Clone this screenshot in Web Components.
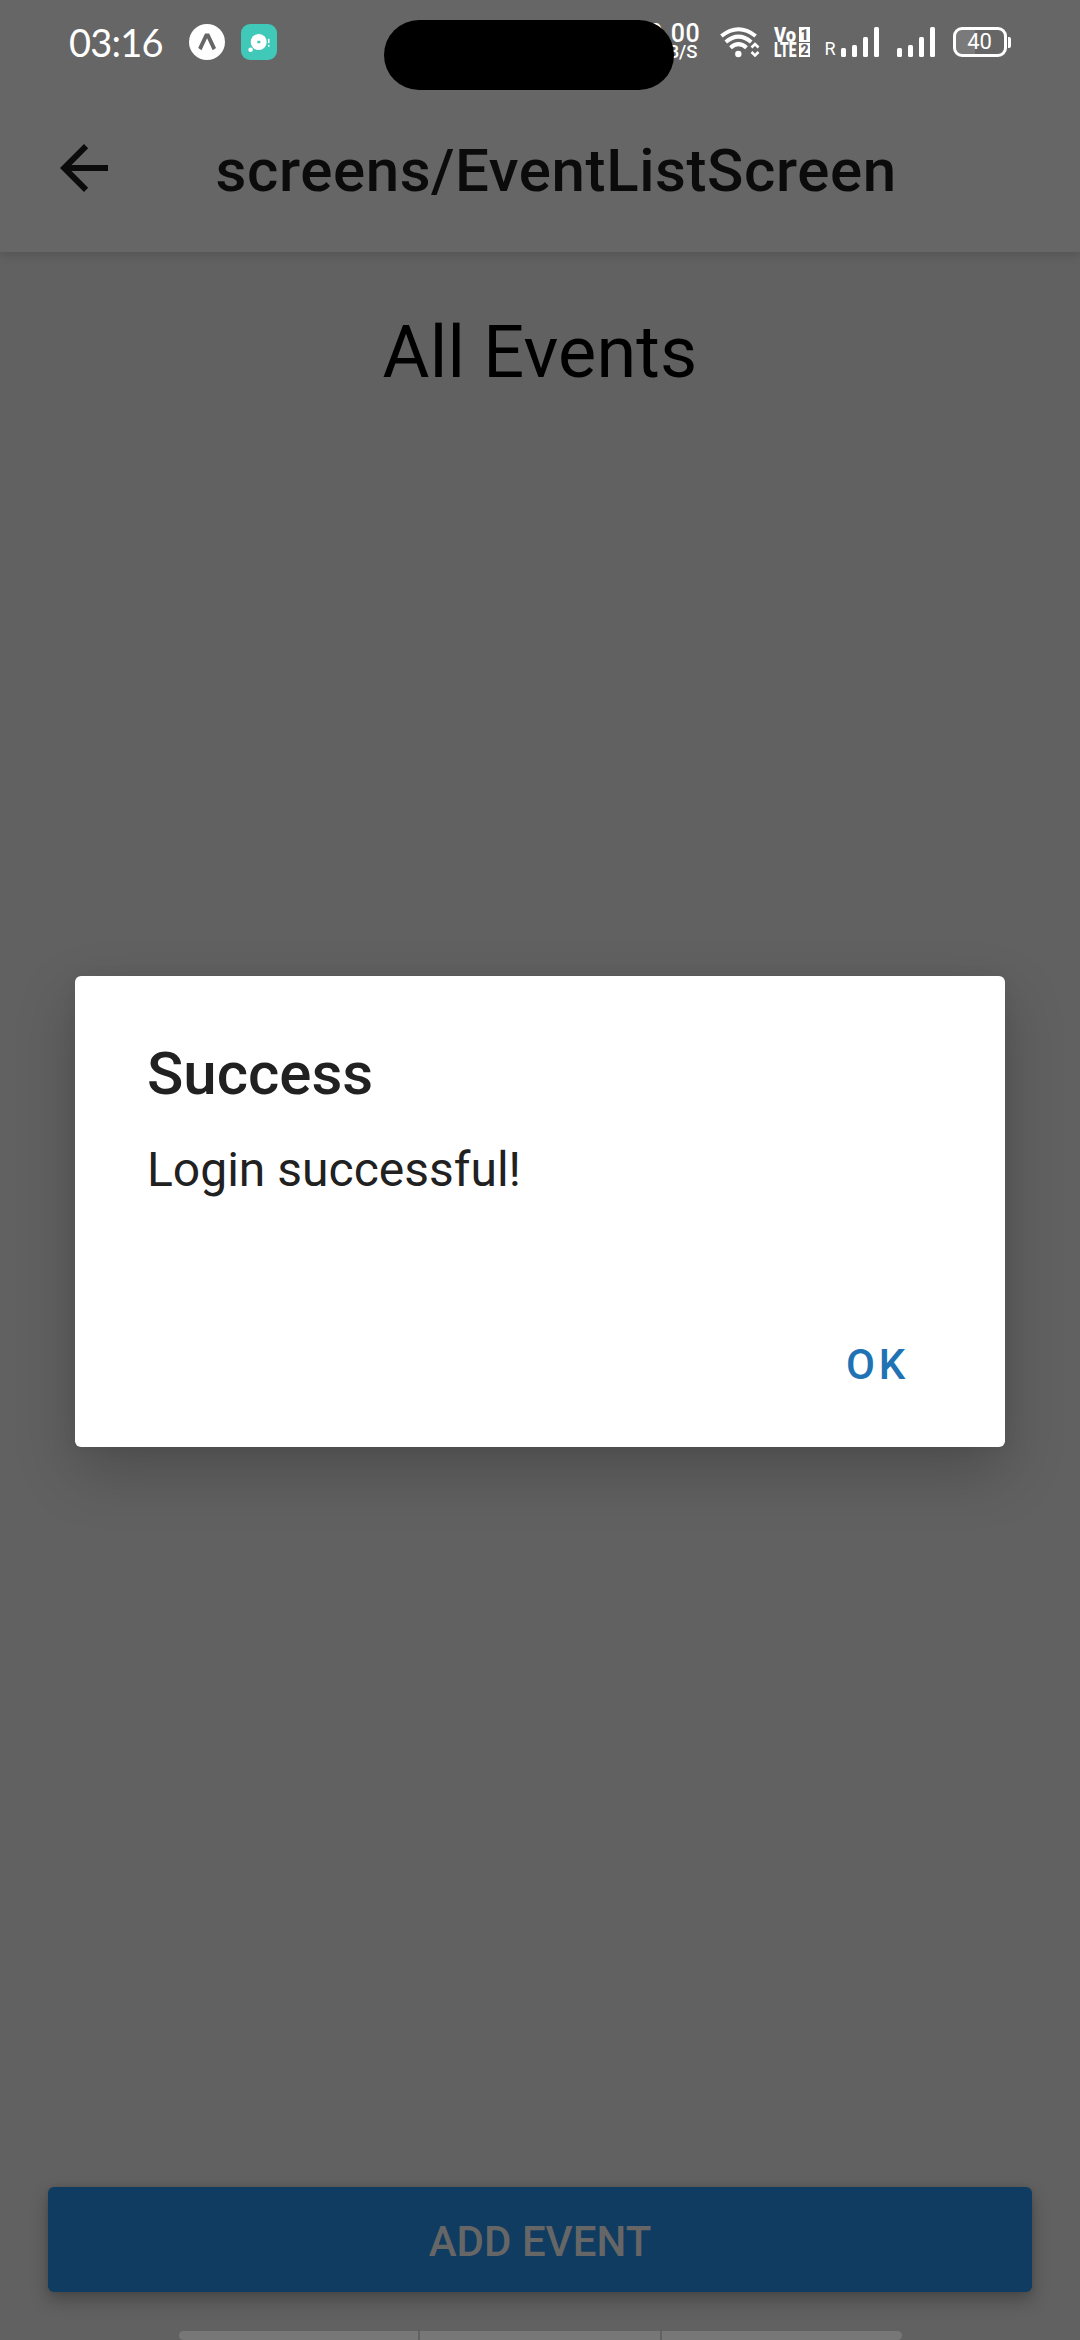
<!DOCTYPE html>
<html lang="en">
<head>
<meta charset="utf-8">
<title>Event list</title>
<style>
html,body{margin:0;padding:0;background:#616161}
body{font-family:Roboto,"Liberation Sans",sans-serif}
</style>
</head>
<body>
<event-app></event-app>
<script>
const define = (name, html) => customElements.define(name, class extends HTMLElement {
  constructor() {
    super();
    this.attachShadow({ mode: 'open' }).innerHTML = html;
  }
});

define('signal-bars', `
<style>
:host{display:flex;align-items:flex-end;gap:6px;height:30px}
i{width:5px;background:#fff;border-radius:1.5px}
</style>
<i style="height:9px"></i><i style="height:12px"></i><i style="height:20px"></i><i style="height:30px"></i>`);

define('battery-level', `
<style>
:host{display:flex;align-items:center;gap:1.5px}
.cell{box-sizing:border-box;width:54px;height:30px;border:3px solid #fff;border-radius:9px;
 background:linear-gradient(90deg,#7a7a7a 19px,transparent 19px);display:flex;align-items:center;justify-content:center;
 font:400 22px/24px Roboto,sans-serif;color:#fff}
.tip{width:3px;height:11px;border-radius:0 2px 2px 0;background:#fff}
</style>
<div class="cell"><slot></slot></div><div class="tip"></div>`);

define('status-bar', `
<style>
:host{display:flex;align-items:flex-start;justify-content:space-between;position:relative;height:84px;box-sizing:border-box;
 padding:24px 69px 0 69px;color:#fff;background:#666}
.left,.right{display:flex;align-items:center;height:36px}
.time{font:400 38px/36px Lato,sans-serif;letter-spacing:-.8px;width:120px;white-space:nowrap}
svg{display:block;flex:none}
.speed{display:flex;flex-direction:column;align-items:flex-end;width:60px;margin-right:19px}
.speed b{font:500 25px/20px Roboto,sans-serif;letter-spacing:.7px}
.speed small{font:500 18.5px/16px Roboto,sans-serif;padding-right:3px}
.r{font:400 18px/18px Roboto,sans-serif;margin:14px 6px 0 14px;width:10px}
.island{position:absolute;left:384px;top:20px;width:290px;height:70px;border-radius:35px;background:#000}
</style>
<div class="left">
 <span class="time">03:16</span>
 <svg width="36" height="36" viewBox="0 0 36 36"><circle cx="18" cy="18" r="18" fill="#fff"/>
  <path d="M16 9.5h4.2L27 24l-3.3 2.2-5.6-12-5.6 12L9.2 24z" fill="#666"/></svg>
 <svg width="36" height="36" viewBox="0 0 36 36" style="margin-left:16px"><rect width="36" height="36" rx="9" fill="#40c8b8"/>
  <circle cx="17.7" cy="18" r="8" fill="#fff"/><rect x="16.3" y="16.8" width="3" height="2.4" fill="#40c8b8"/>
  <circle cx="9.6" cy="25.8" r="2.3" fill="#fff"/><path d="M27.8 14.8v4.4M27.8 21v1.8" stroke="#fff" stroke-width="1.4"/></svg>
</div>
<div class="right">
 <div class="speed"><b>0.00</b><small>KB/S</small></div>
 <svg width="40" height="32" viewBox="0 0 40 32">
  <g fill="none" stroke="#fff" stroke-width="4"><path d="M1.4 10Q18.500-3.500 35.600 10"/><path d="M5.800 16Q18.500 5.200 31.200 16"/><path d="M10.500 21.700Q18.500 14.500 26.500 21.700"/></g>
  <circle cx="18.300" cy="28" r="3.200" fill="#fff"/>
  <path d="M31.500 21.500L35 18l3.500 3.500M31.500 26L35 29.500l3.500-3.500" stroke="#fff" stroke-width="2.600" fill="none"/></svg>
 <svg width="37" height="31" viewBox="0 0 37 31" style="margin-left:14px" font-family="Roboto,sans-serif" font-weight="900" fill="#fff">
  <text x="0" y="14.500" font-size="20" textLength="22" lengthAdjust="spacingAndGlyphs">Vo</text>
  <text x="0" y="30" font-size="19.500" textLength="22.500" lengthAdjust="spacingAndGlyphs">LTE</text>
  <rect x="25" y="0" width="11" height="15"/><rect x="25" y="16" width="11" height="14"/>
  <g fill="#666" font-size="14"><text x="26.500" y="12.500">1</text><text x="26.500" y="28">2</text></g></svg>
 <span class="r">R</span>
 <signal-bars></signal-bars>
 <signal-bars style="margin:0 18px"></signal-bars>
 <battery-level>40</battery-level>
</div>
<div class="island"></div>`);

define('nav-header', `
<style>
:host{display:flex;align-items:center;height:168px;box-sizing:border-box;padding:0 60px;background:#666;
 box-shadow:0 3px 9px rgba(0,0,0,.14);position:relative}
svg{display:block;flex:none}
h1{margin:5px 0 0 107.500px;font:500 60px/70px Roboto,sans-serif;color:#0b0b0b;white-space:nowrap;letter-spacing:.6px}
</style>
<svg width="48" height="48" viewBox="0 0 48 48"><path d="M48 21H11.500L28.200 4.200 24 0 0 24l24 24 4.200-4.200L11.500 27H48z" fill="#0b0b0b"/></svg>
<h1><slot></slot></h1>`);

define('action-button', `
<style>
:host{display:flex;justify-content:center;height:105px;box-sizing:border-box;padding-top:30px;margin:0 48px;border-radius:6px;
 background:#0f3c60;color:#666;font:500 42px/50px Roboto,sans-serif;box-shadow:0 8px 18px rgba(0,0,0,.27),0 0 5px rgba(0,0,0,.1)}
</style><slot></slot>`);

define('system-nav', `
<style>
:host{display:flex;gap:2px;width:723px;height:9px;margin:39px auto 0;border-radius:6px;overflow:hidden}
i{flex:1;background:#777}
</style><i></i><i></i><i></i>`);

define('alert-dialog', `
<style>
:host{display:flex;flex-direction:column;width:930px;height:471px;box-sizing:border-box;padding:63px 96px 57px 72px;
 background:#fff;border-radius:6px;color:#212121;box-shadow:0 24px 60px rgba(0,0,0,.22),0 0 16px rgba(0,0,0,.05)}
h2{margin:0;font:500 60px/70px Roboto,sans-serif}
p{margin:33px 0 0;font:400 48px/56px Roboto,sans-serif}
.ok{margin-top:auto;align-self:flex-end;font:500 42px/50px Roboto,sans-serif;letter-spacing:3.750px;color:#1f72b3}
</style>
<h2><slot name="title"></slot></h2><p><slot></slot></p><div class="ok"><slot name="action"></slot></div>`);

define('event-app', `
<style>
:host{display:flex;flex-direction:column;position:relative;height:2340px;width:1080px;background:#616161;overflow:hidden}
status-bar{z-index:2}
main{flex:1;display:flex;flex-direction:column;justify-content:space-between;padding-top:59px}
h2{margin:0;text-align:center;font:400 72px/84px Roboto,sans-serif;color:#000;letter-spacing:.2px}
.overlay{position:absolute;inset:0;display:flex;justify-content:center;align-items:flex-start;padding-top:976px;z-index:3}
</style>
<status-bar></status-bar>
<nav-header>screens/EventListScreen</nav-header>
<main><h2>All Events</h2><div><action-button>ADD EVENT</action-button><system-nav></system-nav></div></main>
<div class="overlay"><alert-dialog><span slot="title">Success</span>Login successful!<span slot="action">OK</span></alert-dialog></div>`);
</script>
</body>
</html>
